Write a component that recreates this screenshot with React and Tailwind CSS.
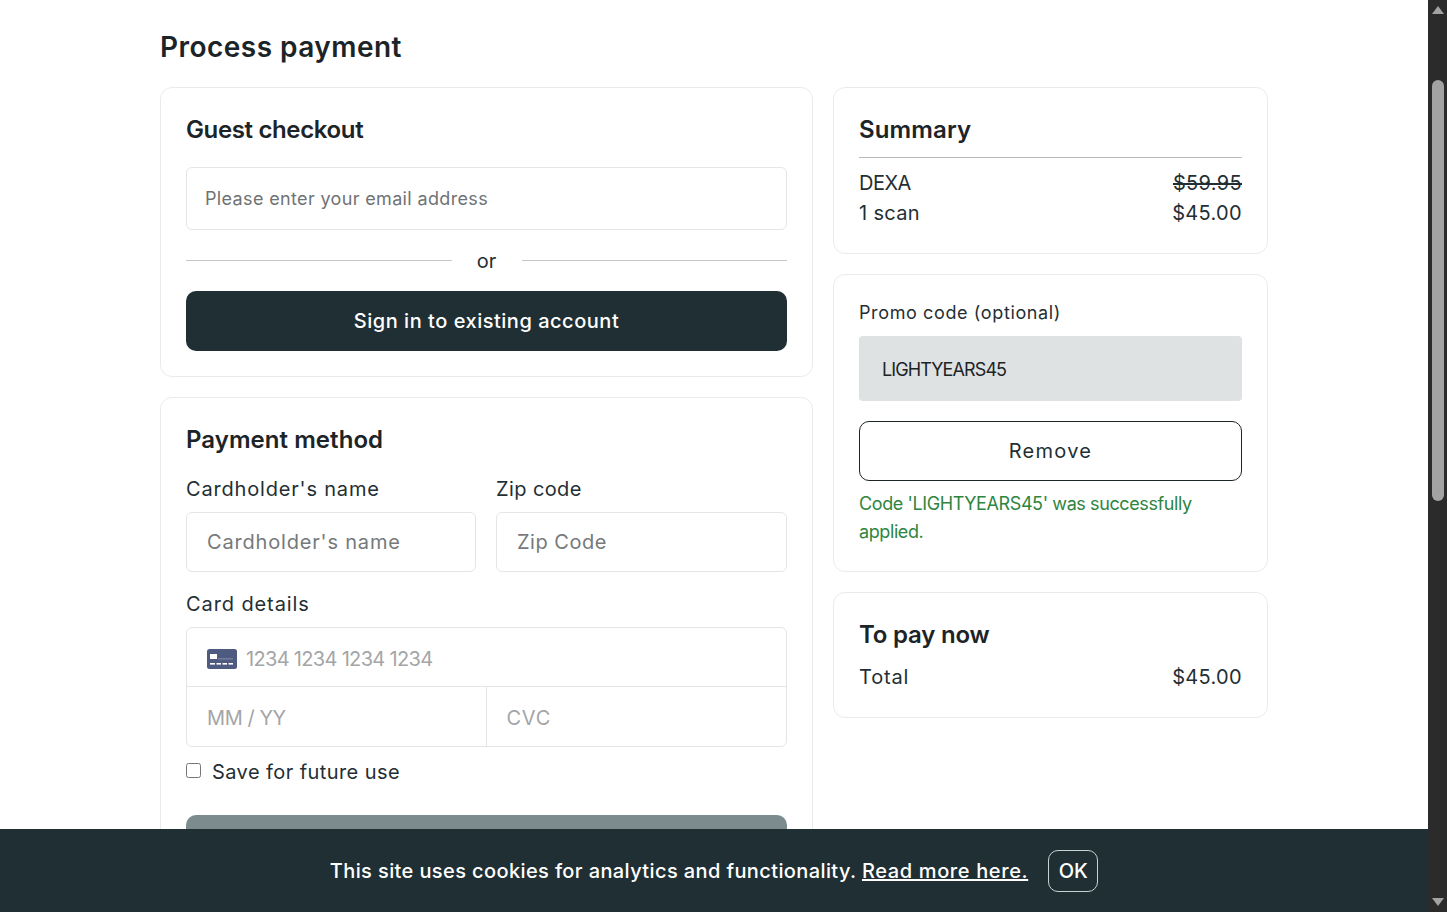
const font = { fontFamily: 'Inter, "Noto Sans", sans-serif' };

function Card({ children, className = '' }) {
  return <div className={`border border-[#e9ebeb] rounded-[12px] bg-white px-[25px] pt-[25px] ${className}`}>{children}</div>;
}

function Heading({ children, className = '' }) {
  return <h2 className={`h-[32px] text-[24px] leading-[34px] font-semibold text-[#1c2427] ${className}`}>{children}</h2>;
}

function CardIcon() {
  return (
    <svg width="30" height="20" viewBox="0 0 30 20" className="shrink-0">
      <rect width="30" height="20" rx="2.5" fill="#4f5a80" />
      <rect x="3" y="5" width="7" height="5" fill="#fff" />
      <rect x="11" y="9.5" width="15" height="0.8" fill="#8f97b0" />
      <rect x="3" y="14" width="5" height="1.6" fill="#fff" />
      <rect x="9.5" y="14" width="4.5" height="1.6" fill="#fff" />
      <rect x="15.5" y="14" width="4.5" height="1.6" fill="#fff" />
      <rect x="21.5" y="14" width="4.5" height="1.6" fill="#fff" />
    </svg>
  );
}

function Scrollbar() {
  return (
    <div className="w-[19px] shrink-0 h-full bg-[#2b2b2b] flex flex-col items-center">
      <svg width="14" height="10" viewBox="0 0 14 10" className="mt-[5px]"><path d="M7 1 L13 9 L1 9 Z" fill="#a3a3a3" /></svg>
      <div className="w-[12px] h-[421px] mt-[65px] bg-[#a3a3a3] rounded-[6px]" />
      <div className="flex-1" />
      <svg width="14" height="10" viewBox="0 0 14 10" className="mb-[5px]"><path d="M1 1 L13 1 L7 9 Z" fill="#a3a3a3" /></svg>
    </div>
  );
}

export default function App() {
  return (
    <div className="flex h-screen overflow-hidden bg-white" style={font}>
      <div className="relative flex-1 overflow-hidden">
        <div className="mx-auto w-[1108px]">
          <h1 className="pt-[24px] h-[87px] text-[28px] leading-[46px] font-semibold text-[#1c2427] tracking-[0.47px]">Process payment</h1>
          <div className="flex gap-[20px] items-start">
            <div className="w-[653px] flex flex-col gap-[20px]">
              <Card className="pb-[25px]">
                <Heading className="tracking-[-0.36px]">Guest checkout</Heading>
                <input
                  placeholder="Please enter your email address"
                  className="mt-[22px] block w-full h-[63px] px-[18px] border border-[#e4e6e6] rounded-[6px] text-[18px] tracking-[0.35px] placeholder:text-[#6f7375] outline-none"
                />
                <div className="mt-[20px] h-[21px] flex items-center">
                  <div className="flex-1 h-px bg-[#c6c8c8]" />
                  <span className="w-[70px] pt-[2px] text-center text-[20px] leading-[21px] text-[#1f2f34]">or</span>
                  <div className="flex-1 h-px bg-[#c6c8c8]" />
                </div>
                <button type="button" className="mt-[20px] block w-full h-[60px] rounded-[10px] bg-[#1f2f34] text-white text-[20px] font-medium tracking-[0.52px]">
                  Sign in to existing account
                </button>
              </Card>
              <Card className="pb-[25px]">
                <Heading className="tracking-[0.05px]">Payment method</Heading>
                <div className="mt-[19px] grid grid-cols-[290px_291px] gap-[20px]">
                  <div>
                    <label className="block h-[30px] text-[20px] leading-[30px] text-[#1f2f34] tracking-[0.82px]">Cardholder's name</label>
                    <input placeholder="Cardholder's name" className="mt-[8px] block w-full h-[60px] px-[20px] border border-[#e4e6e6] rounded-[6px] text-[20px] tracking-[0.82px] placeholder:text-[#75797b] outline-none" />
                  </div>
                  <div>
                    <label className="block h-[30px] text-[20px] leading-[30px] text-[#1f2f34] tracking-[0.4px]">Zip code</label>
                    <input placeholder="Zip Code" className="mt-[8px] block w-full h-[60px] px-[20px] border border-[#e4e6e6] rounded-[6px] text-[20px] tracking-[0.5px] placeholder:text-[#75797b] outline-none" />
                  </div>
                </div>
                <label className="mt-[17px] block h-[30px] text-[20px] leading-[30px] text-[#1f2f34] tracking-[0.9px]">Card details</label>
                <div className="mt-[8px] h-[120px] border border-[#e4e6e6] rounded-[6px] flex flex-col text-[20px] text-[#a3a5a7]">
                  <div className="h-[59px] flex items-center gap-[9px] px-[20px] pt-[3px] border-b border-[#e4e6e6]">
                    <CardIcon />
                    <span className="tracking-[-0.68px]">1234 1234 1234 1234</span>
                  </div>
                  <div className="flex-1 grid grid-cols-2">
                    <div className="flex items-center px-[20px] pt-[2px] border-r border-[#e4e6e6] tracking-[-0.43px]">MM / YY</div>
                    <div className="flex items-center px-[20px] pt-[2px] tracking-[0.7px]">CVC</div>
                  </div>
                </div>
                <div className="mt-[10px] h-[30px] flex items-center gap-[11px]">
                  <input type="checkbox" className="w-[15px] h-[15px] m-0 -mt-[4px]" />
                  <span className="text-[20px] leading-[30px] text-[#1f2f34] tracking-[0.42px]">Save for future use</span>
                </div>
                <button type="button" className="mt-[28px] block w-full h-[60px] rounded-[10px] bg-[#7b8b8e]" />
              </Card>
            </div>
            <div className="w-[435px] flex flex-col gap-[20px]">
              <Card className="pb-[25px]">
                <Heading className="tracking-[0.15px]">Summary</Heading>
                <div className="mt-[12px] h-px bg-[#b9bbbb]" />
                <div className="mt-[10px] flex justify-between text-[20px] leading-[30px] text-[#1f2f34]">
                  <span className="tracking-[-0.5px]">DEXA</span>
                  <span className="line-through tracking-[0.33px]">$59.95</span>
                </div>
                <div className="flex justify-between text-[20px] leading-[30px] text-[#1f2f34] tracking-[0.33px]">
                  <span>1 scan</span>
                  <span>$45.00</span>
                </div>
              </Card>
              <Card className="pb-[25px]">
                <label className="block h-[24px] text-[18px] leading-[26px] text-[#1f2f34] tracking-[0.62px]">Promo code (optional)</label>
                <div className="mt-[12px] h-[65px] flex items-center px-[23px] pt-[1px] bg-[#dfe2e2] rounded-[4px] text-[18px] text-[#1c2427] tracking-[-0.9px]">LIGHTYEARS45</div>
                <button type="button" className="mt-[20px] block w-full h-[60px] rounded-[10px] border border-[#1c2427] text-[20px] text-[#1f2f34] tracking-[1.3px]">Remove</button>
                <p className="mt-[9px] text-[18px] leading-[28px] text-[#2e8540] tracking-[-0.4px]">Code 'LIGHTYEARS45' was successfully applied.</p>
              </Card>
              <Card className="pb-[25px]">
                <Heading className="tracking-[-0.2px]">To pay now</Heading>
                <div className="mt-[12px] flex justify-between text-[20px] leading-[30px] text-[#1f2f34]">
                  <span className="tracking-[0.8px]">Total</span>
                  <span className="tracking-[0.33px]">$45.00</span>
                </div>
              </Card>
            </div>
          </div>
        </div>
        <div className="absolute left-0 right-0 bottom-0 h-[83px] bg-[#1f2f34] flex items-center justify-center gap-[20px] text-white text-[20px] font-medium">
          <p className="tracking-[0.39px]">This site uses cookies for analytics and functionality. <a className="underline tracking-[0.62px]">Read more here.</a></p>
          <button type="button" className="w-[50px] h-[42px] border border-[#c9d2d2] rounded-[10px]">OK</button>
        </div>
      </div>
      <Scrollbar />
    </div>
  );
}
